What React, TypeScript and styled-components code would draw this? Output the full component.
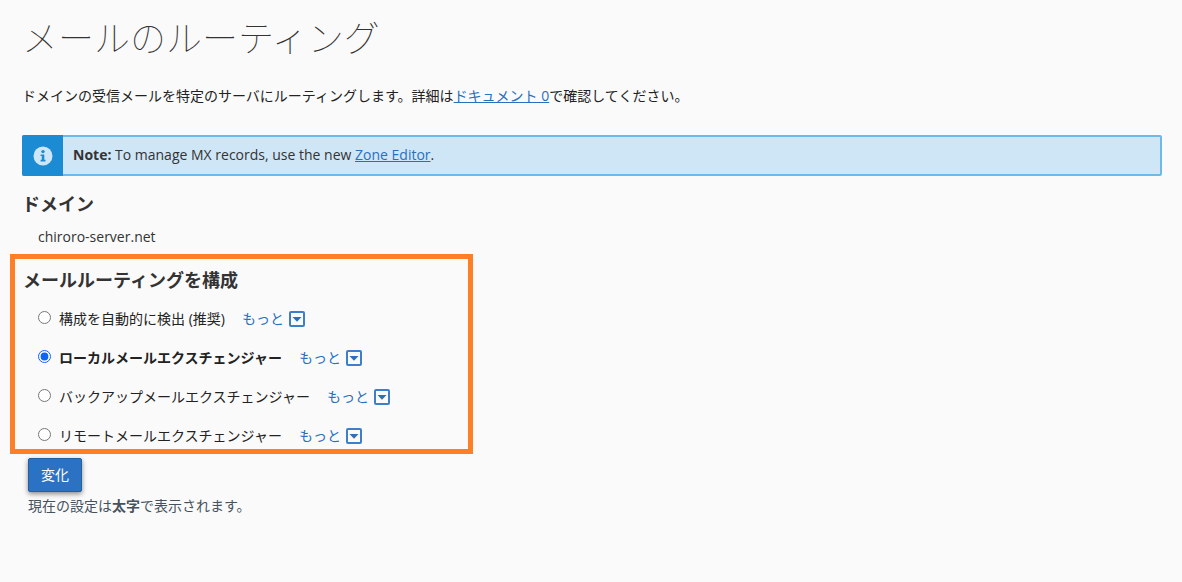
import styled, { createGlobalStyle } from "styled-components";

const GlobalStyle = createGlobalStyle`
  html, body {
    margin: 0;
    background: #fafafa;
  }

  body {
    font-family: "Open Sans", "Noto Sans CJK JP", sans-serif;
    font-size: 14px;
    line-height: 20px;
    color: #333;
  }
`;

const options = [
  { id: "auto", label: "構成を自動的に検出 (推奨)", current: false },
  { id: "local", label: "ローカルメールエクスチェンジャー", current: true },
  { id: "backup", label: "バックアップメールエクスチェンジャー", current: false },
  { id: "remote", label: "リモートメールエクスチェンジャー", current: false },
];

const InfoIcon = () => (
  <svg width="20" height="20" viewBox="0 0 20 20" aria-hidden="true">
    <circle cx="10" cy="10" r="9.5" fill="#cfe6f7" />
    <circle cx="10" cy="5.6" r="1.7" fill="#1b8bd3" />
    <path d="M7.6 8.4h3.7v5.4h1.2v1.6H7.6v-1.6h1.2v-3.8H7.6z" fill="#1b8bd3" />
  </svg>
);

const MoreIcon = () => (
  <svg width="16" height="16" viewBox="0 0 16 16" aria-hidden="true">
    <rect x="1" y="1" width="14" height="14" rx="1" fill="#fafafa" stroke="#3f7fc9" strokeWidth="2" />
    <path d="M3.5 6h9L8 10.8z" fill="#2f6fb8" />
  </svg>
);

export default function App() {
  return (
    <Page>
      <GlobalStyle />
      <Title>メールのルーティング</Title>
      <Description>
        ドメインの受信メールを特定のサーバにルーティングします。詳細は
        <DocLink href="#">ドキュメント 0</DocLink>で確認してください。
      </Description>

      <Note>
        <NoteBadge>
          <InfoIcon />
        </NoteBadge>
        <NoteText>
          <strong>Note:</strong> To manage MX records, use the new <DocLink href="#">Zone Editor</DocLink>.
        </NoteText>
      </Note>

      <SectionTitle>ドメイン</SectionTitle>
      <DomainName>chiroro-server.net</DomainName>

      <Highlight>
        <HighlightTitle>メールルーティングを構成</HighlightTitle>
        {options.map((opt) => (
          <OptionRow key={opt.id}>
            <Radio type="radio" name="mx" defaultChecked={opt.current} />
            <OptionLabel $current={opt.current}>{opt.label}</OptionLabel>
            <MoreLink href="#">
              もっと
              <MoreIcon />
            </MoreLink>
          </OptionRow>
        ))}
      </Highlight>

      <SubmitButton type="button">変化</SubmitButton>
      <Footnote>
        現在の設定は<strong>太字</strong>で表示されます。
      </Footnote>
    </Page>
  );
}

const Page = styled.main`
  height: 582px;
  box-sizing: border-box;
  padding: 17px 20px 0 22px;
  overflow: hidden;
`;

const Title = styled.h1`
  margin: 0;
  height: 44px;
  font-size: 36px;
  line-height: 44px;
  font-weight: 100;
  color: #333;
`;

const Description = styled.p`
  margin: 25px 0 0;
  color: #222;
`;

const DocLink = styled.a`
  color: #2a6fbd;
  text-decoration: underline;
`;

const Note = styled.div`
  display: flex;
  align-items: stretch;
  height: 41px;
  box-sizing: border-box;
  margin-top: 29px;
  background: #cfe6f7;
  border: 2px solid #6bbaea;
  border-radius: 2px;
`;

const NoteBadge = styled.div`
  display: flex;
  align-items: center;
  justify-content: center;
  width: 40px;
  margin: -2px 0 -2px -2px;
  padding-left: 1px;
  background: #1b8bd3;
  border-radius: 2px 0 0 2px;
`;

const NoteText = styled.div`
  align-self: center;
  padding: 0 0 1px 10px;
  color: #333;
`;

const SectionTitle = styled.h2`
  margin: 15px 0 0;
  font-size: 18px;
  line-height: 26px;
  font-weight: 700;
  color: #333;
`;

const DomainName = styled.div`
  margin-top: 10px;
  padding-left: 16px;
`;

const Highlight = styled.section`
  box-sizing: border-box;
  width: 463px;
  height: 200px;
  margin: 7px 0 0 -12px;
  padding: 8px 0 0 8px;
  border: 5px solid #ff7f27;
`;

const HighlightTitle = styled.h2`
  margin: 0 0 6px;
  font-size: 18px;
  line-height: 26px;
  font-weight: 700;
  color: #333;
`;

const OptionRow = styled.div`
  display: flex;
  align-items: center;
  height: 39px;
  padding-left: 14px;
`;

const Radio = styled.input`
  width: 13px;
  height: 13px;
  margin: 0 8px 2px 1px;
  accent-color: #0d63f3;
`;

const OptionLabel = styled.span<{ $current: boolean }>`
  font-weight: ${({ $current }) => ($current ? 700 : 400)};
  color: #222;
`;

const MoreLink = styled.a`
  display: inline-flex;
  align-items: center;
  gap: 5px;
  margin-left: 17px;
  color: #2a6fbd;
  text-decoration: none;
`;

const SubmitButton = styled.button`
  display: block;
  width: 54px;
  height: 34px;
  margin: 4px 0 0 6px;
  padding: 0;
  background: #2b72c4;
  border: 1px solid #245f9f;
  border-radius: 2px;
  box-shadow: 0 2px 5px rgba(0, 0, 0, 0.45);
  color: #fff;
  font: inherit;
`;

const Footnote = styled.p`
  margin: 4px 0 0 6px;
  color: #45525e;
`;
